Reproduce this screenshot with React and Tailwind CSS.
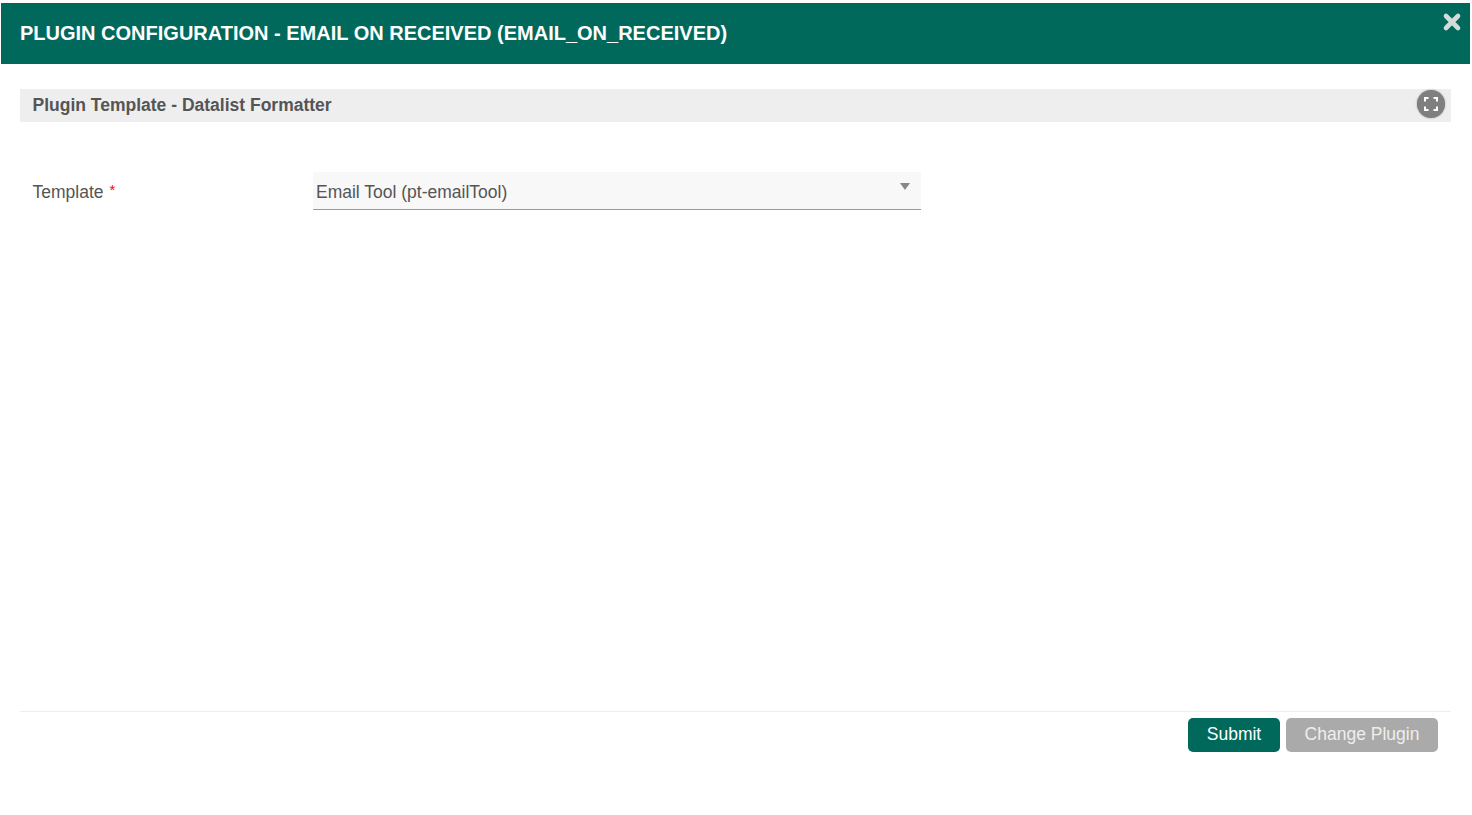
import React from "react";

const CloseIcon = () => (
  <svg width="20" height="20" viewBox="0 0 20 20" className="block">
    <path d="M4 4 L16 16 M16 4 L4 16" stroke="#d4dcd9" strokeWidth="4.6" strokeLinecap="round" />
  </svg>
);

const FullscreenIcon = () => (
  <svg width="14" height="14" viewBox="0 0 14 14" className="block">
    <path
      d="M1 4.5 V1 H4.5 M9.5 1 H13 V4.5 M13 9.5 V13 H9.5 M4.5 13 H1 V9.5"
      fill="none"
      stroke="#ffffff"
      strokeWidth="2"
    />
  </svg>
);

export default function App() {
  return (
    <div className="w-[1472px] h-[815px] flex flex-col bg-white pt-[3px] pl-px pr-[2px] font-['Liberation_Sans',Arial,sans-serif] overflow-hidden">
      <header className="relative h-[61px] bg-[#00695c] flex items-center pl-[19px] pb-[2px]">
        <h1 className="text-[20px] leading-none font-bold text-white uppercase">
          Plugin Configuration - Email On Received (email_on_received)
        </h1>
        <button className="absolute right-[8px] top-[9px]">
          <CloseIcon />
        </button>
      </header>

      <main className="flex-1 flex flex-col px-[19px] pt-[25px]">
        <div className="h-[33px] bg-[#eeeeee] flex items-center justify-between pl-[12.5px] pr-[6px]">
          <h2 className="text-[17.5px] leading-none font-bold text-[#555555]">Plugin Template - Datalist Formatter</h2>
          <span className="w-[28px] h-[28px] -mt-[4px] rounded-full bg-[#7f7f7f] shadow-[0_0_2px_#999999] flex items-center justify-center">
            <FullscreenIcon />
          </span>
        </div>

        <div className="flex items-center pl-[12.5px] mt-[50px] h-[38px]">
          <label className="w-[280.5px] text-[17.5px] text-[#555555] pt-[3px]">
            Template <span className="relative -top-[3px] left-px text-[15px] leading-none text-[#ff0000]">*</span>
          </label>
          <div className="relative w-[608px] h-[38px] bg-[#f8f8f8] border-b border-[#999999] pl-[3px] pt-[3px] flex items-center text-[17.5px] text-[#555555]">
            Email Tool (pt-emailTool)
            <span className="absolute right-[11px] top-[11px] w-0 h-0 border-x-[5px] border-x-transparent border-t-[7px] border-t-[#888888]" />
          </div>
        </div>

        <div className="mt-auto mb-[63px] border-t border-[#eeeeee] pt-[6px] pr-[13px] flex justify-end gap-[6px]">
          <button className="h-[34px] w-[92px] pb-[2px] rounded-[5px] bg-[#00695c] text-[17.5px] text-white">Submit</button>
          <button className="h-[34px] w-[152px] pb-[2px] rounded-[5px] bg-[#aaaaaa] text-[17.5px] text-[#eeeeee]">Change Plugin</button>
        </div>
      </main>
    </div>
  );
}
